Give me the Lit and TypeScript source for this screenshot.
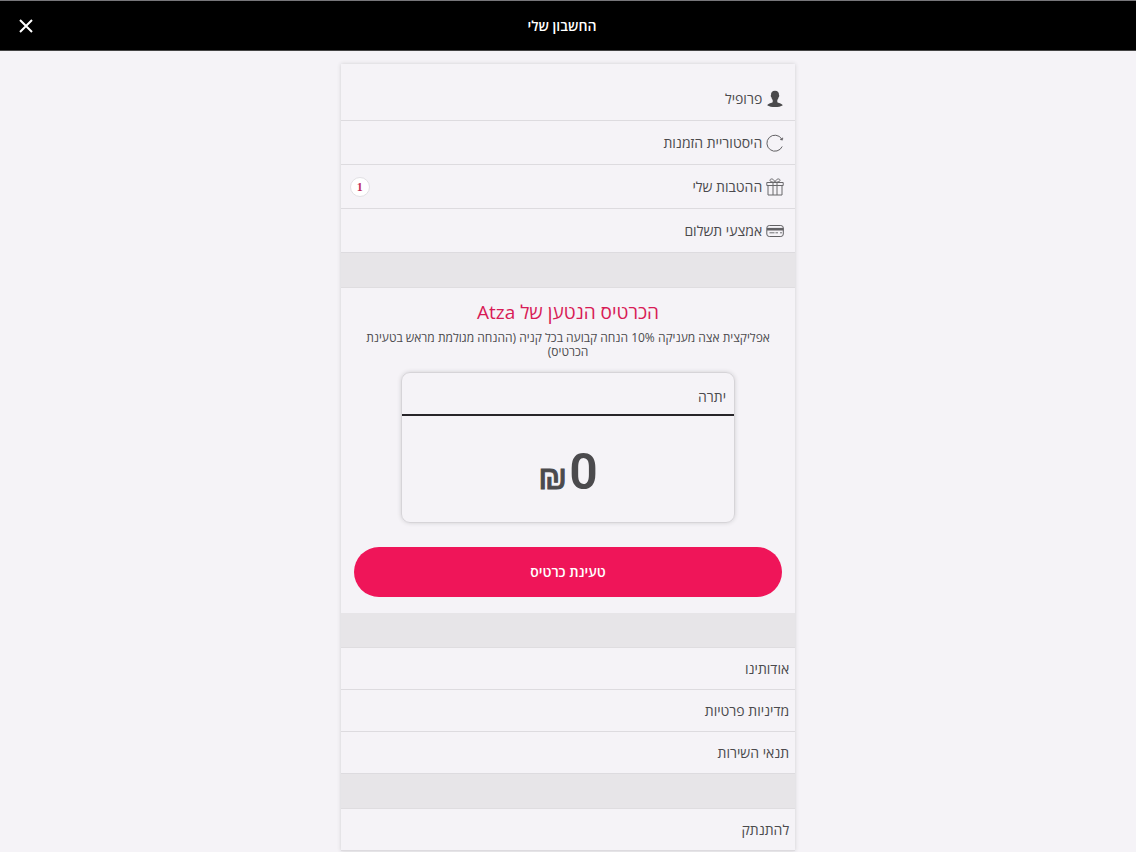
import { LitElement, html, css, svg } from "lit";
import { customElement } from "lit/decorators.js";

const icons = {
  profile: svg`<path d="M9 .8c-2.900 0-4.100 1.700-4 4.200-.5.300-.3 1.800.4 2.300.3 1.400.9 2.200 1.300 2.700v1.900C6.300 13 1.700 13.200 1.200 15.300 3 16.700 6 17 9 17s6-.3 7.800-1.700c-.5-2.100-5.100-2.300-5.500-3.400V10c.4-.5 1-1.300 1.300-2.700.7-.5.9-2 .4-2.300C13.100 2.500 11.900.8 9 .8z" fill="#4a494b"/>`,
  history: svg`<g fill="none" stroke="#626164"><path d="M16.200 12.500A8 8 0 1 1 15.600 4.800"/><path d="M16.900 3.800l-.5 2.400-2.300-.7z" fill="#626164" stroke-width=".5"/></g>`,
  gift: svg`<g fill="none" stroke="#69686b"><path d="M.8 4.500h16.400v3H.8zM2 7.500h14v9.500H2zM7 4.500V17M11 4.500V17M9 4.500C7.500 4 4 4.200 4 2.400 4 .2 8 .2 9 4.500zM9 4.500c1.500-.5 5-.3 5-2.100 0-2.200-4-2.200-5 2.100z"/></g>`,
  card: svg`<g fill="none" stroke="#626164"><rect x=".8" y="3.500" width="16.500" height="11" rx="2.500"/><path d="M1 7.200h16.500" stroke-width="2.600"/><path d="M3.500 10.800h5M9.500 10.800h2.500M14 10.800h2" stroke-width=".9"/></g>`,
};

const accountLinks = [
  { label: "פרופיל", icon: icons.profile },
  { label: "היסטוריית הזמנות", icon: icons.history },
  { label: "ההטבות שלי", icon: icons.gift, count: 1 },
  { label: "אמצעי תשלום", icon: icons.card },
];
const infoLinks = ["אודותינו", "מדיניות פרטיות", "תנאי השירות"];

@customElement("app-root")
export class AppRoot extends LitElement {
  static styles = css`
    :host {
      display: block;
      direction: rtl;
      min-height: 100vh;
      background: #f5f3f7;
      color: #4b4a4d;
      font: 14px/20px "Open Sans", "Noto Sans", sans-serif;
    }
    * { box-sizing: border-box; }
    header {
      display: grid;
      grid-template-columns: 64px 1fr 52px;
      align-items: center;
      height: 51px;
      background: #000;
      border-top: 1px solid #77767a;
      border-bottom: 1px solid #444;
      color: #fff;
    }
    h1 {
      grid-column: 2;
      margin: 0;
      font-size: 14px;
      font-weight: 600;
      text-align: center;
    }
    button { font: inherit; border: 0; cursor: pointer; }
    .close {
      display: grid;
      place-items: center;
      height: 48px;
      padding: 0;
      background: none;
      color: #fff;
    }
    main {
      width: 40%;
      min-width: 320px;
      margin: 13px auto 0;
      box-shadow: 0 0 4px #cfcdd1;
    }
    .account { padding-top: 13px; }
    .row {
      display: flex;
      align-items: center;
      gap: 4px;
      height: 44px;
      padding: 0 11px;
      border-bottom: 1px solid #dddbdf;
      color: inherit;
      text-decoration: none;
    }
    .info { height: 42px; padding: 0 6px; }
    .icon { width: 18px; height: 18px; }
    .count {
      display: grid;
      place-items: center;
      width: 20px;
      height: 20px;
      margin-inline-start: auto;
      border: 1px solid #e2e0e4;
      border-radius: 50%;
      background: #fff;
      color: #c0305c;
      font: bold 12px/16px "Liberation Serif", serif;
    }
    .account .row { padding-left: 9px; }
    .band { height: 35px; background: #e7e5e8; border-bottom: 1px solid #dfdde0; }
    section {
      padding: 12px 13px 16px;
      text-align: center;
    }
    h2 {
      margin: 0;
      color: #d81b56;
      font-size: 19px;
      line-height: 24px;
      font-weight: 400;
    }
    p { margin: 7px 0 13px; font-size: 12px; line-height: 14px; }
    .balance {
      width: 78%;
      margin: 0 auto 24px;
      border: 1px solid #d6d4d8;
      border-radius: 9px;
      box-shadow: 0 0 4px #d0ced2;
    }
    .balance-title {
      margin: 0;
      padding: 14px 8px 7px;
      border-bottom: 2px solid #272529;
      font-size: 14px;
      font-weight: 400;
      text-align: right;
    }
    .amount {
      display: flex;
      justify-content: center;
      align-items: baseline;
      gap: 2px;
      height: 106px;
      padding-top: 20px;
      font: 600 50px/72px Roboto, sans-serif;
    }
    .currency { font: 34px/72px "Liberation Sans", sans-serif; -webkit-text-stroke: 1px currentColor; }
    .load {
      width: 100%;
      height: 50px;
      border-radius: 25px;
      background: #ef1559;
      color: #fff;
      font-weight: 600;
    }
  `;

  render() {
    return html`
      <header>
        <h1>החשבון שלי</h1>
        <button class="close" aria-label="סגירה">
          <svg width="14" height="14" viewBox="0 0 14 14" fill="none" stroke="currentColor" stroke-width="2"><path d="M1 1l12 12M13 1L1 13"/></svg>
        </button>
      </header>
      <main>
        <nav class="account">
          ${accountLinks.map(
            (l) => html`<a class="row" href="#"
              ><svg class="icon" viewBox="0 0 18 18" aria-hidden="true">${l.icon}</svg
              ><span>${l.label}</span>${l.count ? html`<span class="count">${l.count}</span>` : ""}</a
            >`
          )}
        </nav>
        <div class="band"></div>
        <section>
          <h2>הכרטיס הנטען של Atza</h2>
          <p>אפליקצית אצה מעניקה 10% הנחה קבועה בכל קניה (ההנחה מגולמת מראש בטעינת הכרטיס)</p>
          <div class="balance">
            <h3 class="balance-title">יתרה</h3>
            <div class="amount"><span>0</span><span class="currency">₪</span></div>
          </div>
          <button class="load">טעינת כרטיס</button>
        </section>
        <div class="band"></div>
        <nav>${infoLinks.map((l) => html`<a class="row info" href="#">${l}</a>`)}</nav>
        <div class="band"></div>
        <nav><a class="row info" href="#">להתנתק</a></nav>
      </main>
    `;
  }
}
